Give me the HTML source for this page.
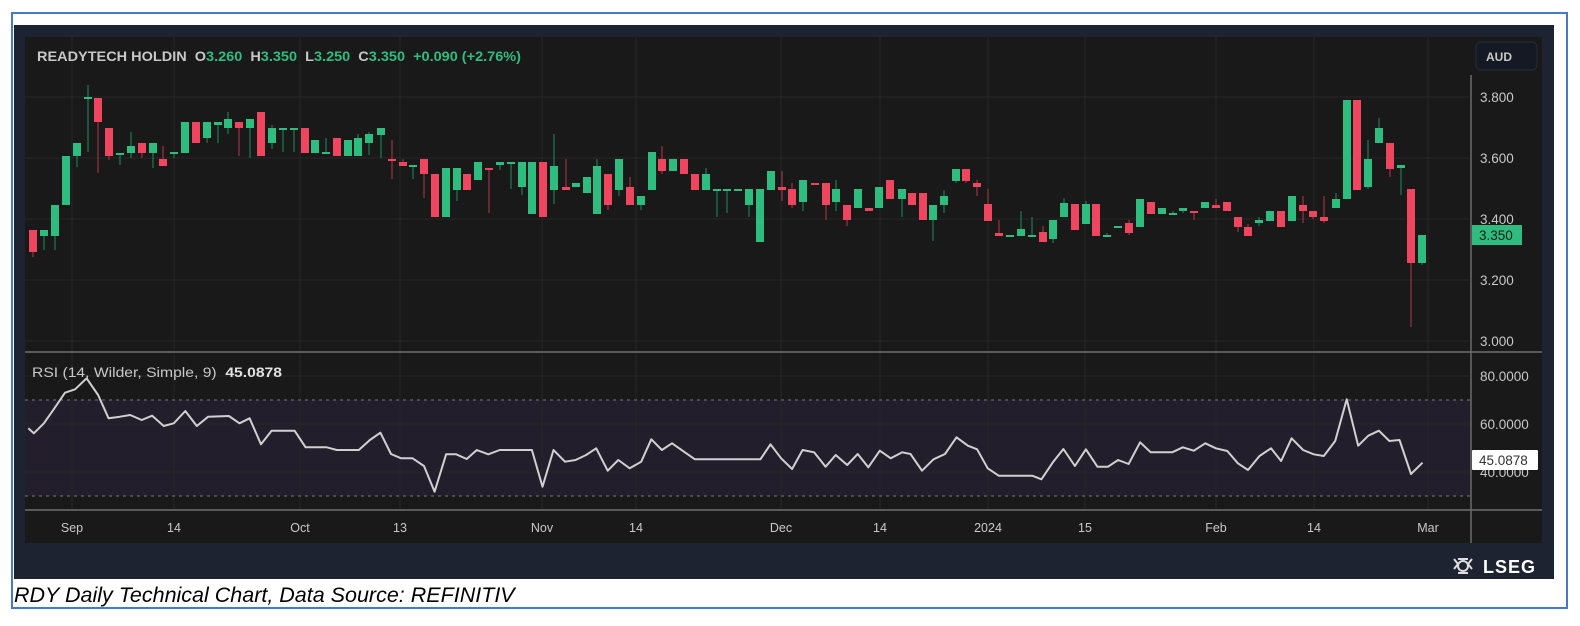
<!DOCTYPE html>
<html><head><meta charset="utf-8">
<style>
*{margin:0;padding:0;box-sizing:border-box}
body{width:1580px;height:626px;background:#fff;position:relative;overflow:hidden;font-family:"Liberation Sans",sans-serif}
#outer{position:absolute;left:11px;top:12px;width:1557px;height:597px;border:2px solid #4a78c8;background:#fff}
#frame{position:absolute;left:14px;top:25px;width:1540px;height:554px;background:#1d2331}
#chart{position:absolute;left:25px;top:37px;width:1517px;height:506px;background:#191919}
svg{position:absolute;left:0;top:0}
#cap{position:absolute;left:14px;top:583px;font-style:italic;font-size:21.5px;color:#000;font-family:"Liberation Sans",sans-serif;white-space:nowrap}
</style></head><body>
<div id="outer"></div>
<div id="frame"></div>
<div id="chart"></div>
<svg id="s" width="1580" height="626" xmlns="http://www.w3.org/2000/svg" font-family="Liberation Sans, sans-serif">
<rect x="25" y="400" width="1446" height="96" fill="#231e2c"/>
<g id="grid" stroke="#262626" stroke-width="1"></g>
<line x1="25" y1="400" x2="1471" y2="400" stroke="#777" stroke-dasharray="3,4"/>
<line x1="25" y1="496" x2="1471" y2="496" stroke="#777" stroke-dasharray="3,4"/>
<g id="candles"></g>
<polyline id="rsi" fill="none" stroke="#d0d0d0" stroke-width="2" stroke-linejoin="round"/>
<line x1="25" y1="352" x2="1542" y2="352" stroke="#5a5a5a" stroke-width="2"/>
<line x1="25" y1="510" x2="1542" y2="510" stroke="#5a5a5a" stroke-width="2"/>
<line x1="1471" y1="75" x2="1471" y2="543" stroke="#6a6a6a" stroke-width="1.5"/>
<g font-size="13.5" fill="#c8c8c8">
<text x="1480" y="102">3.800</text><text x="1480" y="163">3.600</text><text x="1480" y="224">3.400</text><text x="1480" y="285">3.200</text><text x="1480" y="346">3.000</text>
<text x="1480" y="381">80.0000</text><text x="1480" y="429">60.0000</text><text x="1480" y="477">40.0000</text>
</g>
<rect x="1472" y="225" width="50" height="20" fill="#2ebd7f"/>
<text x="1479" y="240" font-size="13.5" fill="#1a1a1a">3.350</text>
<rect x="1472" y="450" width="66" height="20" fill="#fff" rx="1"/>
<text x="1479" y="465" font-size="13.5" fill="#333">45.0878</text>
<rect x="1476" y="42" width="61" height="28" rx="5" fill="#141924" stroke="#262c38"/>
<text x="1486" y="61" font-size="12" fill="#c8c8c8" font-weight="bold">AUD</text>
<text x="37" y="61" font-size="14" font-weight="bold" fill="#c8c8c8" xml:space="preserve" textLength="484" lengthAdjust="spacingAndGlyphs">READYTECH HOLDIN  O<tspan fill="#2ebd7f">3.260</tspan>  H<tspan fill="#2ebd7f">3.350</tspan>  L<tspan fill="#2ebd7f">3.250</tspan>  C<tspan fill="#2ebd7f">3.350  +0.090 (+2.76%)</tspan></text>
<text x="32" y="377" font-size="14" fill="#c8c8c8" xml:space="preserve" textLength="250" lengthAdjust="spacingAndGlyphs">RSI (14, Wilder, Simple, 9)  <tspan font-weight="bold" fill="#e0e0e0">45.0878</tspan></text>
<g font-size="12.5" fill="#c8c8c8" text-anchor="middle">
<text x="72" y="532">Sep</text><text x="174" y="532">14</text><text x="300" y="532">Oct</text><text x="400" y="532">13</text><text x="542" y="532">Nov</text><text x="636" y="532">14</text><text x="781" y="532">Dec</text><text x="880" y="532">14</text><text x="988" y="532">2024</text><text x="1085" y="532">15</text><text x="1216" y="532">Feb</text><text x="1314" y="532">14</text><text x="1428" y="532">Mar</text>
</g>
<g fill="#fff"><circle cx="1463" cy="566" r="5" fill="none" stroke="#ddd" stroke-width="2"/><path d="M1454 559l4 5l-4 5M1472 559l-4 5l4 5M1458 559h10M1458 573h10" stroke="#ddd" stroke-width="2" fill="none"/></g>
<text x="1483" y="573" font-size="18" font-weight="bold" fill="#fff" letter-spacing="1">LSEG</text>
</svg>
<div id="cap">RDY Daily Technical Chart, Data Source: REFINITIV</div>
<script>
var N="http://www.w3.org/2000/svg";
function el(t,a,p){var e=document.createElementNS(N,t);for(var k in a)e.setAttribute(k,a[k]);p.appendChild(e);return e;}
var g=document.getElementById('grid');
[97,158,219,280,341,376,424,472].forEach(function(y){el('line',{x1:25,y1:y,x2:1471,y2:y},g);});
[72,174,300,400,542,636,781,880,988,1085,1216,1314,1428].forEach(function(x){el('line',{x1:x,y1:37,x2:x,y2:510},g);});
var C=[[33,'r',230,252,230,257],[44,'g',230,236,230,250],[55,'g',205,236,205,250],[66,'g',156,205,156,205],[77,'g',143,156,143,167],[88,'g',97,98,85,152],[98,'r',98,122,98,173],[109,'r',128,156,128,160],[120,'g',153,154,153,165],[131,'g',146,153,132,158],[142,'r',143,153,143,158],[153,'g',143,153,143,168],[163,'r',159,166,146,166],[174,'g',152,153,152,158],[185,'g',122,153,122,153],[196,'r',122,143,122,143],[207,'g',122,138,122,143],[218,'g',122,125,122,143],[228,'g',119,128,112,134],[239,'r',122,128,122,156],[250,'g',119,128,119,158],[261,'r',112,156,112,156],[272,'g',128,143,125,149],[283,'g',128,129,128,152],[294,'g',128,129,128,152],[305,'r',128,153,128,153],[315,'g',140,153,140,153],[326,'g',152,153,138,153],[337,'r',138,156,138,156],[348,'g',140,156,140,156],[358,'g',138,156,134,156],[369,'g',134,143,132,155],[381,'g',128,135,128,158],[392,'r',159,160,140,179],[403,'r',162,166,159,166],[413,'g',165,166,165,179],[424,'r',159,174,159,198],[435,'r',174,217,174,217],[446,'g',168,217,168,217],[457,'g',168,190,168,201],[467,'r',174,190,174,190],[478,'g',162,180,162,180],[489,'r',168,169,168,213],
[500,'g',162,165,162,170],[511,'g',162,163,162,189],[522,'g',162,187,162,195],[532,'g',162,214,162,214],[543,'r',162,217,162,217],[554,'g',166,190,134,204],[566,'r',187,190,159,190],[576,'g',183,187,183,187],[587,'g',177,193,177,193],[597,'g',166,214,159,214],[608,'r',174,205,174,210],[619,'g',159,190,159,196],[630,'r',187,205,177,205],[641,'g',196,205,196,210],[652,'g',152,190,152,190],[662,'r',159,171,146,174],[673,'g',159,171,159,171],[684,'r',159,174,159,174],[695,'r',174,190,174,190],[706,'g',174,190,168,190],[717,'g',189,190,189,217],[727,'g',189,190,189,213],[738,'g',189,190,189,190],[749,'g',189,205,189,217],[760,'g',189,242,189,242],[771,'g',171,190,171,190],[782,'r',187,190,171,201],[792,'r',189,205,183,208],[803,'g',180,202,180,211],[815,'r',183,184,183,184],[826,'r',183,205,183,220],[836,'g',189,202,180,211],[847,'r',205,220,205,226],[858,'g',189,208,189,208],[869,'r',208,211,208,211],[879,'g',187,208,187,208],[890,'r',180,199,180,199],[902,'g',189,199,189,217],[912,'r',193,205,193,205],[923,'r',193,220,193,220],[933,'g',205,220,205,241],[944,'g',196,205,190,213],[956,'g',169,181,169,183],[966,'r',169,181,169,183],
[977,'r',183,187,180,196],[988,'r',204,221,189,221],[999,'r',233,236,220,236],[1010,'g',235,236,235,236],[1021,'g',229,236,211,236],[1032,'g',235,236,217,236],[1043,'r',232,242,226,242],[1053,'g',220,239,220,243],[1064,'g',203,217,198,217],[1075,'r',204,230,204,230],[1086,'g',204,224,201,224],[1096,'r',204,236,204,236],[1107,'g',235,236,233,236],[1118,'g',226,227,226,227],[1129,'r',223,233,220,235],[1140,'g',199,227,199,227],[1151,'r',202,214,202,214],[1162,'g',208,214,208,214],[1173,'g',213,214,211,214],[1183,'g',208,211,208,213],[1194,'r',211,212,211,220],[1205,'g',202,208,202,208],[1216,'r',205,208,199,208],[1227,'r',202,211,202,211],[1238,'r',217,227,217,232],[1248,'r',227,236,224,236],[1259,'g',220,223,217,226],[1270,'g',211,221,211,221],[1281,'r',211,227,211,227],[1292,'g',196,221,196,221],[1303,'r',205,211,196,223],[1313,'r',211,217,211,219],[1324,'r',217,221,196,223],[1336,'g',199,208,193,208],[1347,'g',100,199,100,199],[1357,'r',100,190,100,190],[1368,'g',159,187,140,189],[1379,'g',128,143,118,143],[1390,'r',143,169,143,177],[1401,'g',165,168,165,195],[1411,'r',189,263,189,327],[1422,'g',235,263,235,265]];
var cg=document.getElementById('candles');
C.forEach(function(c){var col=c[1]=='g'?'#2ebd7f':'#f0455e';var wc=c[1]=='g'?'#1f7a55':'#9c3244';
el('line',{x1:c[0],y1:c[4],x2:c[0],y2:c[5],stroke:wc,'stroke-width':1.2},cg);
var h=Math.max(2,c[3]-c[2]);el('rect',{x:c[0]-4,y:c[2],width:8,height:h,fill:col},cg);});
var R1=[18,220,30,235,52,205,75,160,98,113,120,103,145,70,170,120,193,190,218,185,240,180,265,195,288,182,313,213,335,205,360,168,385,213,410,185,455,183,478,205,500,190,525,268,548,227,598,227,622,277,668,277,690,285,738,285,762,255,785,233,808,297,830,310,855,310,880,333,903,410,928,298,950,298,973,312,995,285,1020,298,1045,285,1115,285,1138,395,1162,285,1187,320,1210,315,1233,300,1255,280,1280,347,1303,315,1328,340,1353,320,1375,253,1398,285,1420,265,1470,313];
var R2=[0,313,88,313,110,268,133,310,157,342,180,285,205,292,230,335,252,300,277,330,300,297,323,337,348,287,372,310,397,292,415,297,440,347,465,313,490,297,515,247,540,272,560,283,583,340,607,362,680,362,700,373,725,322,748,282,773,333,797,283,822,335,845,335,867,315,890,327,915,262,938,292,985,292,1008,277,1032,287,1057,265,1080,280,1105,288,1128,325,1150,345,1175,303,1200,280,1222,318,1245,250,1270,285,1293,298,1315,303,1340,258,1365,133,1390,272,1412,242,1435,227,1458,258,1480,255,1505,357,1530,323];
var pts=[];
for(var i=0;i<R1.length;i+=2)pts.push((20+R1[i]/2.178).toFixed(1)+','+(355+R1[i+1]/3).toFixed(1));
for(var i=0;i<R2.length;i+=2)pts.push((720+R2[i]/2.178).toFixed(1)+','+(355+R2[i+1]/3).toFixed(1));
document.getElementById('rsi').setAttribute('points',pts.join(' '));
</script>
</body></html>
